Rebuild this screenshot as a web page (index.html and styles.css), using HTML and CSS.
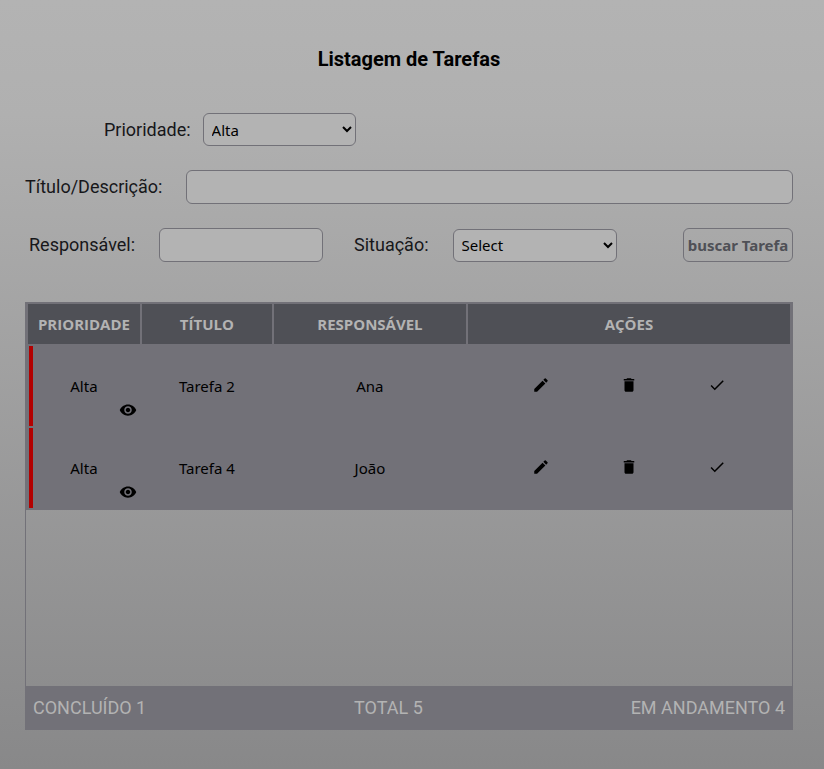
FILE: index.html
```html
<!DOCTYPE html>
<html lang="pt-BR">
<head>
<meta charset="utf-8">
<meta name="viewport" content="width=device-width, initial-scale=1">
<title>Listagem de Tarefas</title>
<link rel="stylesheet" href="styles.css">
</head>
<body>
<svg class="sprite" aria-hidden="true">
  <symbol id="eye" viewBox="0 0 24 24"><path d="M12 4.5C7 4.5 2.73 7.61 1 12c1.73 4.39 6 7.5 11 7.5s9.27-3.11 11-7.5c-1.73-4.39-6-7.5-11-7.5zM12 17c-2.76 0-5-2.24-5-5s2.24-5 5-5 5 2.24 5 5-2.24 5-5 5zm0-8c-1.66 0-3 1.34-3 3s1.34 3 3 3 3-1.34 3-3-1.34-3-3-3z"/></symbol>
  <symbol id="edit" viewBox="0 0 24 24"><path d="M3 17.25V21h3.75L17.81 9.94l-3.75-3.75L3 17.25zM20.71 7.04c.39-.39.39-1.02 0-1.41l-2.34-2.34a.9959.9959 0 0 0-1.41 0l-1.83 1.83 3.75 3.75 1.83-1.83z"/></symbol>
  <symbol id="trash" viewBox="0 0 24 24"><path d="M6 19c0 1.1.9 2 2 2h8c1.1 0 2-.9 2-2V7H6v12zM19 4h-3.500l-1-1h-5l-1 1H5v2h14V4z"/></symbol>
  <symbol id="check" viewBox="0 0 24 24"><path d="M9 16.200 4.800 12l-1.400 1.400L9 19 21 7l-1.400-1.400L9 16.200z"/></symbol>
</svg>
<main class="page">
  <h1 class="title">Listagem de Tarefas</h1>
  <form class="filters">
    <div class="row row-priority">
      <label for="prioridade">Prioridade:</label>
      <select id="prioridade" class="field"><option>Alta</option><option>Média</option><option>Baixa</option></select>
    </div>
    <div class="row row-search">
      <label for="titulo">Título/Descrição:</label>
      <input id="titulo" class="field" type="text">
    </div>
    <div class="row row-people">
      <div class="group group-owner">
        <label for="responsavel">Responsável:</label>
        <input id="responsavel" class="field" type="text">
      </div>
      <div class="group group-status">
        <label for="situacao">Situação:</label>
        <select id="situacao" class="field"><option>Select</option><option>Concluído</option><option>Em andamento</option></select>
      </div>
      <button class="search" type="button">buscar Tarefa</button>
    </div>
  </form>
  <section class="panel">
    <div class="scroll">
      <table class="tasks">
        <thead>
          <tr><th class="c-priority">PRIORIDADE</th><th class="c-title">TÍTULO</th><th class="c-owner">RESPONSÁVEL</th><th>AÇÕES</th></tr>
        </thead>
        <tbody>
          <tr>
            <td class="high">Alta<button class="icon view" type="button" aria-label="Ver"><svg><use href="#eye"/></svg></button></td>
            <td>Tarefa 2</td>
            <td>Ana</td>
            <td><div class="actions">
              <button class="icon" type="button" aria-label="Editar"><svg><use href="#edit"/></svg></button>
              <button class="icon" type="button" aria-label="Excluir"><svg><use href="#trash"/></svg></button>
              <button class="icon" type="button" aria-label="Concluir"><svg><use href="#check"/></svg></button>
            </div></td>
          </tr>
          <tr>
            <td class="high">Alta<button class="icon view" type="button" aria-label="Ver"><svg><use href="#eye"/></svg></button></td>
            <td>Tarefa 4</td>
            <td>João</td>
            <td><div class="actions">
              <button class="icon" type="button" aria-label="Editar"><svg><use href="#edit"/></svg></button>
              <button class="icon" type="button" aria-label="Excluir"><svg><use href="#trash"/></svg></button>
              <button class="icon" type="button" aria-label="Concluir"><svg><use href="#check"/></svg></button>
            </div></td>
          </tr>
        </tbody>
      </table>
    </div>
    <footer class="totals"><span>CONCLUÍDO 1</span><span>TOTAL 5</span><span>EM ANDAMENTO 4</span></footer>
  </section>
</main>
</body>
</html>
```

FILE: styles.css
```css
* { box-sizing: border-box; }

body {
  margin: 0;
  min-height: 100vh;
  background: linear-gradient(#b3b3b3, #b0b0b0 15%, #888889);
  color: #17171a;
  font: 18px/24px Roboto, sans-serif;
}

.sprite { display: none; }

.page { padding: 47px 31px 39px 25px; }

.title {
  margin: 0 0 42px;
  color: #000;
  font-size: 20px;
  line-height: 24px;
  font-weight: 700;
  text-align: center;
}

.filters { display: grid; grid-template-columns: minmax(0, 1fr); gap: 24px; }

.row, .group { display: flex; align-items: center; }

.row-priority { gap: 12px; padding-left: 79px; }
.row-priority .field { width: 153px; }
.row-search { gap: 24px; }
.row-search .field { flex: 1; }
.row-people { padding-left: 4px; }
.group { gap: 24px; min-width: 0; }
.group .field { flex: 1; }
.group-owner { flex: 294 0 0; margin-right: 31px; }
.group-status { flex: 263 0 0; margin-right: 66px; }

.field, .search {
  height: 34px;
  min-width: 0;
  border: 1px solid #727178;
  border-radius: 6px;
  font: 15px "Noto Sans", sans-serif;
}

.field { padding: 0 4px; background: #b3b3b3; color: #000; }

select.field { height: 33px; }

.search {
  flex: none;
  width: 110px;
  padding: 0;
  background: transparent;
  color: #4f5056;
  font-weight: 700;
  white-space: nowrap;
}

.panel { margin-top: 40px; }

.scroll {
  height: 384px;
  border: solid #727178;
  border-width: 0 1px;
  overflow-y: auto;
}

.tasks {
  width: 100%;
  table-layout: fixed;
  border-collapse: separate;
  border-spacing: 2px;
  background: #727178;
  color: #000;
  font: 15px/20px "Noto Sans", sans-serif;
  text-align: center;
}

.tasks th {
  height: 40px;
  padding: 0;
  background: #4f5056;
  color: #b3b3b3;
  font: 700 15px/20px "Open Sans", sans-serif;
}

.c-priority { width: 14.8%; }
.c-title { width: 17.2%; }
.c-owner { width: 25.4%; }

.tasks td { position: relative; height: 80px; padding: 0; }

.high { background: linear-gradient(#b30000, #b30000) 1px 0 / 4px 100% no-repeat; }

.icon {
  width: 18px;
  height: 18px;
  padding: 0;
  border: 0;
  background: none;
  color: #000;
}

.icon svg { display: block; width: 18px; height: 18px; fill: currentColor; }

.view { position: absolute; right: 3px; bottom: 7px; }

.actions {
  display: grid;
  grid-template-columns: repeat(3, 1fr);
  justify-items: center;
  padding: 0 9% 2px;
}

.totals {
  display: flex;
  justify-content: space-between;
  padding: 10px 8px;
  background: #727178;
  color: #b3b3b3;
}
```
